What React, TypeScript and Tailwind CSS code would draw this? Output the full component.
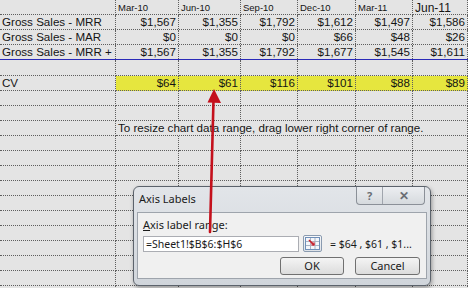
import React from 'react';

const colW = ['w-[116px]', 'w-[63px]', 'w-[62px]', 'w-[57px]', 'w-[58px]', 'w-[57px]', 'w-[55px]'];

const header = ['Mar-10', 'Jun-10', 'Sep-10', 'Dec-10', 'Mar-11', 'Jun-11'];

const rows: { label: string; values: string[] }[] = [
  { label: 'Gross Sales - MRR', values: ['$1,567', '$1,355', '$1,792', '$1,612', '$1,497', '$1,586'] },
  { label: 'Gross Sales - MAR', values: ['$0', '$0', '$0', '$66', '$48', '$26'] },
  { label: 'Gross Sales - MRR +', values: ['$1,567', '$1,355', '$1,792', '$1,677', '$1,545', '$1,611'] },
];

const cv = ['$64', '$61', '$116', '$101', '$88', '$89'];

const grid = 'border-r border-b border-dotted border-[#5e5e5e]';

const EmptyRow = ({ h = 'h-[15px]' }: { h?: string }) => (
  <div className={`flex ${h}`}>
    {colW.map((w, i) => (
      <div key={i} className={`${w} shrink-0 ${grid}`} />
    ))}
  </div>
);

const RangeIcon = () => (
  <svg width="15" height="13" viewBox="0 0 15 13">
    <rect x="0.5" y="0.5" width="14" height="12" fill="#f4f6fa" stroke="#6f8fb8" />
    <path d="M1 4.5H14M1 8.5H14M5.5 1V12M10 1V12" stroke="#a8b4c4" strokeWidth="1" />
    <rect x="5.5" y="4.5" width="4.5" height="4" fill="#d8a0a8" />
    <path d="M4 3L9 8" stroke="#c81e2a" strokeWidth="1.6" />
    <path d="M9.5 8.5L9.5 5.5L6.5 8.5Z" fill="#c81e2a" />
  </svg>
);

export default function App() {
  return (
    <div className="relative w-[468px] h-[288px] overflow-hidden bg-[#e4e4e4] text-[#141414] font-['Liberation_Sans',Arial,sans-serif]">
      {/* header row */}
      <div className="flex h-[15px]">
        <div className={`${colW[0]} shrink-0 ${grid}`} />
        {header.map((h, i) => (
          <div
            key={h}
            className={`${colW[i + 1]} shrink-0 ${grid} pl-[2px] leading-none ${
              i === 5 ? 'text-[12px] pt-[2px]' : 'text-[9.5px] pt-[3px]'
            }`}
          >
            {h}
          </div>
        ))}
      </div>

      {rows.map((r, ri) => (
        <div
          key={r.label}
          className={`flex h-[15px] border-b ${
            ri === 2 ? 'border-solid border-[#2a2ab8]' : 'border-dotted border-[#5e5e5e]'
          }`}
        >
          <div className="w-[116px] shrink-0 border-r border-dotted border-[#5e5e5e] pl-[2px] text-[11.6px] leading-[14px] whitespace-nowrap">
            {r.label}
          </div>
          {r.values.map((v, i) => (
            <div
              key={i}
              className={`${colW[i + 1]} shrink-0 border-r border-dotted border-[#5e5e5e] pr-[2px] text-right text-[11.6px] leading-[14px]`}
            >
              {v}
            </div>
          ))}
        </div>
      ))}

      <EmptyRow h="h-[16px]" />

      {/* CV row */}
      <div className="flex h-[15px]">
        <div className={`${colW[0]} shrink-0 ${grid} pl-[2px] text-[11.6px] leading-[14px]`}>CV</div>
        {cv.map((v, i) => (
          <div
            key={i}
            className={`${colW[i + 1]} shrink-0 ${grid} bg-[#e6e63e] pr-[2px] text-right text-[11.6px] leading-[14px]`}
          >
            {v}
          </div>
        ))}
      </div>

      <EmptyRow />
      <EmptyRow />

      {/* instruction row */}
      <div className="flex h-[15px]">
        <div className={`${colW[0]} shrink-0 ${grid}`} />
        <div className={`w-[352px] shrink-0 ${grid} pl-[2px] text-[11.6px] leading-[14px] whitespace-nowrap`}>
          To resize chart data range, drag lower right corner of range.
        </div>
      </div>

      {Array.from({ length: 11 }).map((_, i) => (
        <EmptyRow key={i} />
      ))}

      {/* Axis Labels dialog */}
      <div className="absolute left-[133px] top-[186px] w-[298px] h-[100px] rounded-[6px] border border-[#5c636c] bg-gradient-to-b from-[#e2e5e9] to-[#d0d5db] shadow-[1px_2px_4px_rgba(0,0,0,0.35)] flex flex-col font-['Noto_Sans',sans-serif] text-[#1a1a1a]">
        <div className="flex h-[25px] justify-between pl-[5px] pr-[5px]">
          <div className="pt-[5px] text-[11px] leading-[14px]">Axis Labels</div>
          <div className="flex h-[18px] rounded-b-[4px] border border-t-0 border-[#8b9098] bg-gradient-to-b from-[#eceef1] to-[#d6dade] overflow-hidden">
            <div className="w-[26px] flex items-center justify-center border-r border-[#a0a5ad] text-[11px] font-bold text-[#6a6e74] leading-none">
              ?
            </div>
            <div className="w-[41px] flex items-center justify-center text-[12px] font-bold text-[#6a6e74] leading-none">
              ✕
            </div>
          </div>
        </div>
        <div className="mx-[3px] flex-1 mb-[6px] border border-[#9ea4ac] bg-[#f0f0f0] flex flex-col px-[5px]">
          <div className="pt-[5px] text-[11px] leading-[14px]">
            <span className="underline">A</span>xis label range:
          </div>
          <div className="mt-[3px] flex items-center h-[17px]">
            <div className="w-[156px] h-[16px] border border-[#abadb3] bg-white pl-[2px] text-[10.5px] leading-[14px] whitespace-nowrap overflow-hidden">
              =Sheet1!$B$6:$H$6
            </div>
            <div className="ml-[4px] w-[19px] h-[17px] rounded-[2px] border border-[#8a9bb0] bg-gradient-to-b from-[#f8f9fb] to-[#dfe3e8] flex items-center justify-center">
              <RangeIcon />
            </div>
            <div className="ml-[8px] text-[10.5px] leading-[14px] whitespace-nowrap">= $64 , $61 , $1...</div>
          </div>
          <div className="mt-[5px] flex justify-end gap-[11px] pr-[1px]">
            <div className="w-[64px] h-[18px] rounded-[3px] border border-[#707070] bg-gradient-to-b from-[#f4f4f4] to-[#dcdcdc] flex items-center justify-center text-[11px]">
              OK
            </div>
            <div className="w-[65px] h-[18px] rounded-[3px] border border-[#707070] bg-gradient-to-b from-[#f4f4f4] to-[#dcdcdc] flex items-center justify-center text-[11px]">
              Cancel
            </div>
          </div>
        </div>
      </div>

      {/* red arrow */}
      <svg className="absolute left-0 top-0 pointer-events-none" width="468" height="288" viewBox="0 0 468 288">
        <path d="M210 232 L213.5 100" stroke="#c4101c" strokeWidth="2.6" strokeLinecap="round" />
        <path d="M214 89 L221 103 L207.5 102.5 Z" fill="#c4101c" />
      </svg>
    </div>
  );
}
